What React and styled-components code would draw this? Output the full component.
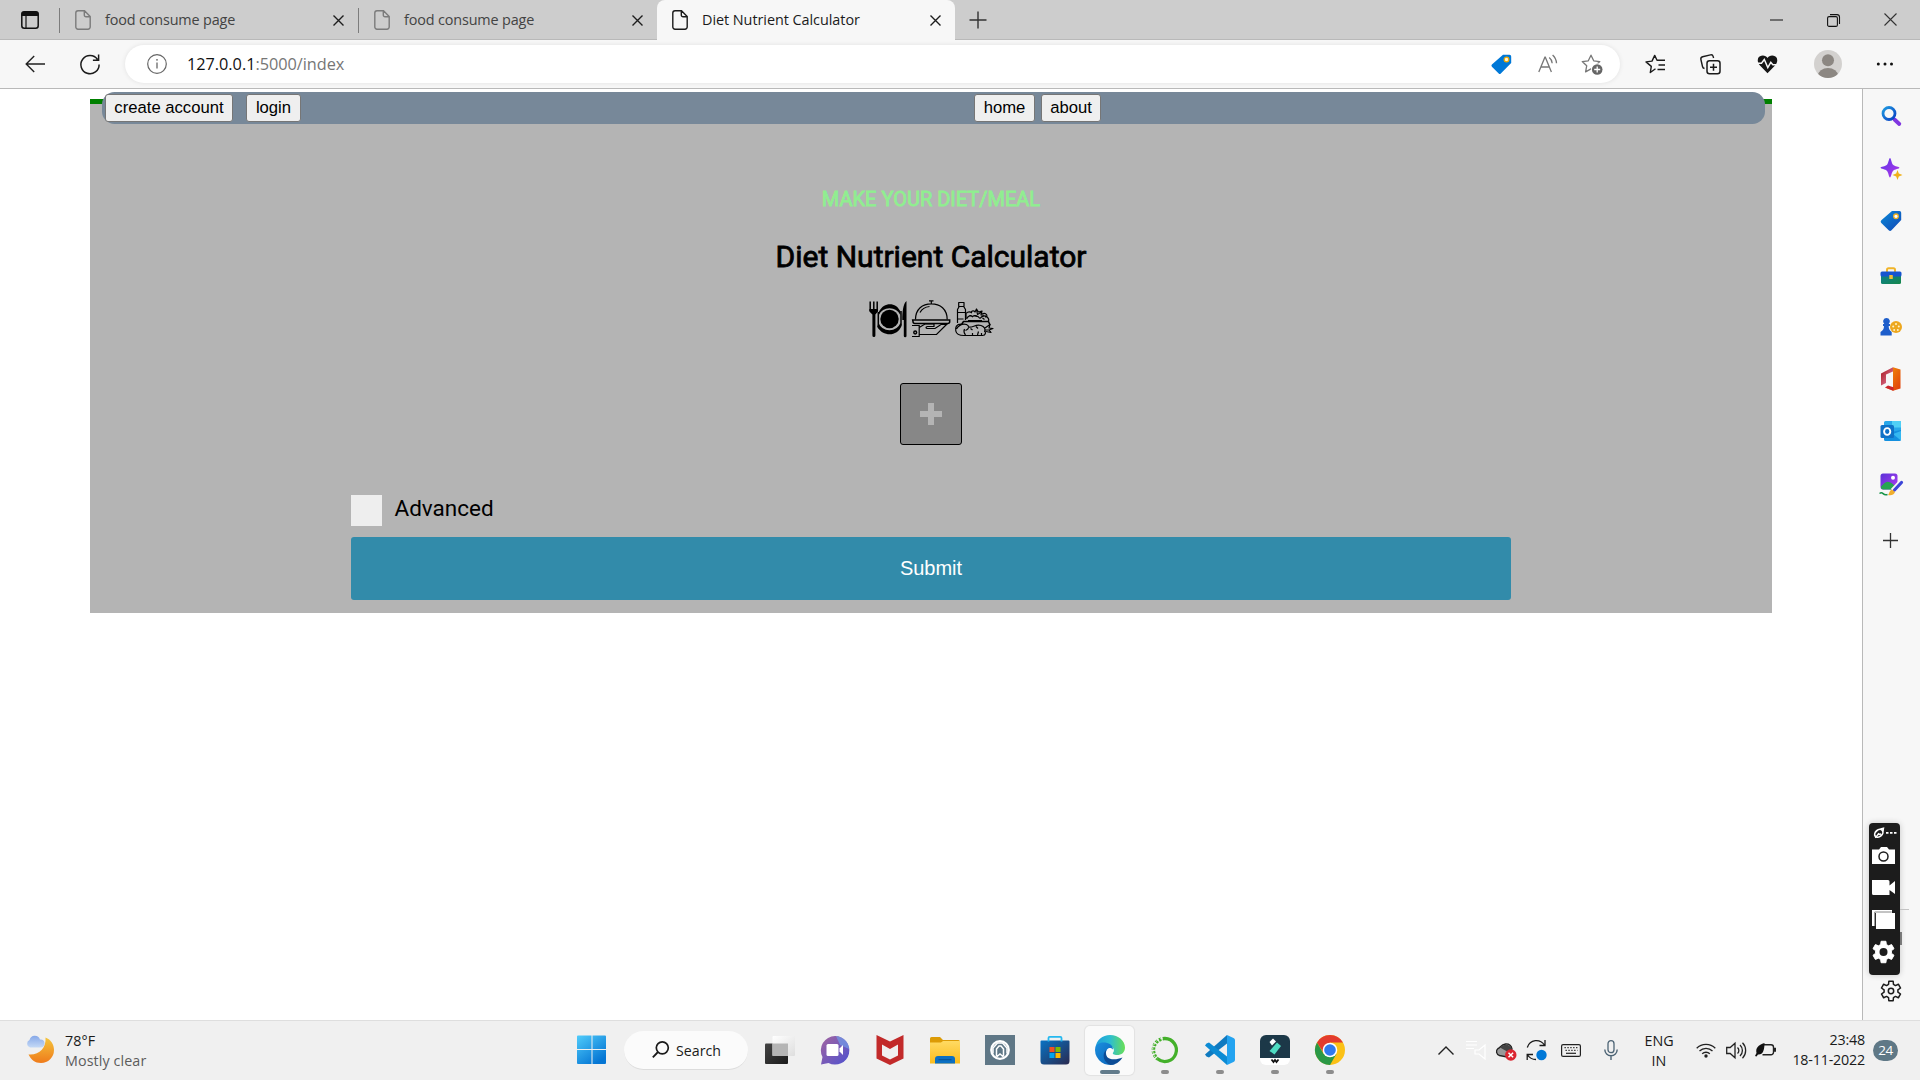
import React from "react";
import styled, { createGlobalStyle } from "styled-components";

const GlobalStyle = createGlobalStyle`
  *, *::before, *::after { box-sizing: border-box; }
  html, body { margin: 0; padding: 0; background: #fff; overflow: hidden; }
  svg { display: block; overflow: visible; }
`;

const ui = `"Open Sans", "Noto Sans", sans-serif`;

const Screen = styled.div`
  width: 1920px;
  height: 1080px;
  display: flex;
  flex-direction: column;
  font-family: ${ui};
  overflow: hidden;
`;

const Glyph = styled.svg`
  flex: none;
  margin-left: ${(p) => p.$ml || 0}px;
  margin-top: ${(p) => p.$mt || 0}px;
`;

const Icon = ({ w = 20, h = 20, ml, mt, children, ...rest }) => (
  <Glyph width={w} height={h} viewBox={`0 0 ${w} ${h}`} fill="none" $ml={ml} $mt={mt} {...rest}>
    {children}
  </Glyph>
);

/* ---------- tab strip ---------- */

const TabStrip = styled.div`
  flex: none;
  height: 40px;
  display: flex;
  align-items: center;
  background: #cdcdcd;
  box-shadow: inset 0 -1px #b9b9b9;
`;

const TabDivider = styled.span`
  width: 1px;
  height: 25px;
  background: #7c7c7c;
  margin-left: ${(p) => p.$ml || 0}px;
`;

const Tab = styled.div`
  width: 298px;
  height: 40px;
  display: flex;
  align-items: center;
  padding: 0 14px 0 15px;
  color: ${(p) => (p.$active ? "#1b1b1b" : "#434343")};
  background: ${(p) => (p.$active ? "#f7f7f7" : "transparent")};
  border-radius: 8px 8px 0 0;
`;

const TabTitle = styled.span`
  flex: 1;
  margin: -1px 0 0 14px;
  font-size: 14.4px;
  letter-spacing: ${(p) => p.$ls}px;
  white-space: nowrap;
`;

const WindowControls = styled.div`
  margin-left: auto;
  padding-right: 23px;
  display: flex;
  align-items: center;
  gap: 44px;
`;

const PageIcon = ({ color }) => (
  <Icon w={16} h={20}>
    <path d="M3 .8h6.500L15.2 6.500V17a2.200 2.200 0 0 1-2.200 2.200H3A2.200 2.200 0 0 1 .8 17V3A2.200 2.200 0 0 1 3 .8ZM9.300 1v4a1.700 1.700 0 0 0 1.700 1.700h4" stroke={color} strokeWidth="1.400" />
  </Icon>
);

const Cross = ({ s = 11, sw = 1.4, color = "#1d1d1d", mt = 1 }) => (
  <Icon w={s} h={s} mt={mt}>
    <path d={`M.5.5l${s - 1} ${s - 1}M${s - 0.5} .5L.5 ${s - 0.5}`} stroke={color} strokeWidth={sw} />
  </Icon>
);

function Tabs() {
  return (
    <TabStrip>
      <Icon w={18} h={18} ml={21}>
        <rect x=".8" y=".8" width="16.400" height="16.400" rx="2.500" stroke="#111" strokeWidth="1.500" />
        <path d="M.5 5V3A2.500 2.500 0 0 1 3 .5h12A2.500 2.500 0 0 1 17.500 3v2Z" fill="#111" />
        <path d="M5 4v13" stroke="#111" strokeWidth="1.200" />
      </Icon>
      <TabDivider $ml={20} />
      <Tab>
        <PageIcon color="#7b7b7b" />
        <TabTitle $ls={-0.14}>food consume page</TabTitle>
        <Cross />
      </Tab>
      <TabDivider />
      <Tab>
        <PageIcon color="#7b7b7b" />
        <TabTitle $ls={-0.14}>food consume page</TabTitle>
        <Cross />
      </Tab>
      <Tab $active>
        <PageIcon color="#1b1b1b" />
        <TabTitle $ls={-0.04}>Diet Nutrient Calculator</TabTitle>
        <Cross />
      </Tab>
      <Icon w={18} h={18} ml={14}>
        <path d="M9 .5v17M.5 9h17" stroke="#333" strokeWidth="1.400" />
      </Icon>
      <WindowControls>
        <Icon w={13} h={13}><path d="M0 6h13" stroke="#111" /></Icon>
        <Icon w={13} h={13}>
          <rect x=".6" y="2.600" width="9.800" height="9.800" rx="1.500" stroke="#111" strokeWidth="1.100" />
          <path d="M3 .6h7A2.500 2.500 0 0 1 12.500 3v7" stroke="#111" strokeWidth="1.100" />
        </Icon>
        <Cross s={13} sw={1.1} color="#333" mt={-1} />
      </WindowControls>
    </TabStrip>
  );
}

/* ---------- toolbar ---------- */

const Toolbar = styled.div`
  flex: none;
  height: 49px;
  display: flex;
  align-items: center;
  background: #f7f7f7;
  border-bottom: 1px solid #b9b9b9;
`;

const AddressBar = styled.div`
  width: 1495px;
  height: 38px;
  margin-left: 25px;
  padding: 0 17px 0 22px;
  display: flex;
  align-items: center;
  background: #fff;
  border-radius: 19px;
  box-shadow: 0 0 5px rgba(0, 0, 0, 0.09);
`;

const Url = styled.span`
  flex: 1;
  margin: -1px 0 0 20px;
  font-size: 16.300px;
  letter-spacing: -0.03px;
  color: #767676;
  b { font-weight: 400; color: #111; }
`;

const Avatar = styled.span`
  width: 28px;
  height: 28px;
  margin-left: 36px;
  border-radius: 50%;
  background: #d3d1cf;
  overflow: hidden;
`;

const STAR = "M10 1.200l2.700 5.600 6.100.8-4.500 4.200 1.100 6.100-5.400-3-5.400 3 1.100-6.100L1.200 7.600l6.100-.8Z";

function Navigation() {
  return (
    <Toolbar>
      <Icon w={20} h={18} ml={25} mt={-1}>
        <path d="M20 9H1.200M9.200 1L1.200 9l8 8" stroke="#222" strokeWidth="1.400" />
      </Icon>
      <Icon w={20} h={20} ml={35}>
        <path d="M17.500 5.500A9.100 9.100 0 1 0 19.100 10.500M18.600.5v5.700h-5.700" stroke="#1b1b1b" strokeWidth="1.500" />
      </Icon>
      <AddressBar>
        <Icon w={20} h={20}>
          <circle cx="10" cy="10" r="9.300" stroke="#666" strokeWidth="1.200" />
          <path d="M10 8.500v6" stroke="#666" strokeWidth="1.300" />
          <circle cx="10" cy="5.800" r=".9" fill="#666" />
        </Icon>
        <Url><b>127.0.0.1</b>:5000/index</Url>
        <Icon w={21} h={21}>
          <path d="M12 .8h6.500A1.700 1.700 0 0 1 20.200 2.500V9L9.800 19.600a1.500 1.500 0 0 1-2.100 0L.9 12.700a1.500 1.500 0 0 1 0-2.100Z" fill="#0078d7" />
          <circle cx="15.500" cy="5.500" r="2.300" fill="#fff6d8" stroke="#f2a900" strokeWidth="1.300" />
        </Icon>
        <Icon w={20} h={20} ml={26}>
          <path d="M.8 18L6.900 3.200h.4L13.400 18M3 13h8.200" stroke="#777" strokeWidth="1.300" />
          <path d="M11.200 3.600a8 8 0 0 1 3 5.600M14.600 1a12 12 0 0 1 3.900 8.200" stroke="#777" strokeWidth="1.300" />
        </Icon>
        <Icon w={22} h={21} ml={23}>
          <path d={STAR} stroke="#777" strokeWidth="1.300" strokeLinejoin="round" />
          <circle cx="16.200" cy="15.500" r="6.300" fill="#fff" />
          <circle cx="16.200" cy="15.500" r="5.300" fill="#666" />
          <path d="M16.200 12.500v6M13.200 15.500h6" stroke="#fff" strokeWidth="1.300" />
        </Icon>
      </AddressBar>
      <Icon w={20} h={20} ml={25}>
        <path d="M10.500 14.800L5.300 18.500l1-6.100L1 7.900l6-.8 2.700-5.700L12 6.200h8M13.500 11H20M12.500 15.500H20" stroke="#1b1b1b" strokeWidth="1.400" strokeLinejoin="round" />
      </Icon>
      <Icon w={21} h={21} ml={35}>
        <rect x="7" y="6.800" width="13" height="13" rx="2.500" stroke="#1b1b1b" strokeWidth="1.500" />
        <path d="M13.500 9.800v7M10 13.300h7" stroke="#1b1b1b" strokeWidth="1.500" />
        <path d="M4.500 14.500A2.500 2.500 0 0 1 2.500 12.500L.9 5.500A2.300 2.300 0 0 1 2.600 2.800L10.500.9A2.300 2.300 0 0 1 13.200 2.600L13.600 4" stroke="#1b1b1b" strokeWidth="1.400" />
      </Icon>
      <Icon w={21} h={19} ml={36}>
        <path d="M10.500 3C12-.4 18.300-.7 19.900 3.300 20.800 5.900 20 8.500 17.800 10.700L10.500 18.200 3.200 10.700C1 8.500.2 5.900 1.100 3.300 2.700-.7 9-.4 10.500 3Z" fill="#161616" />
        <path d="M0 8.200h4.500L7.300 4.500l3.500 8 3-5.200 2 2.400H21" stroke="#f7f7f7" strokeWidth="1.500" />
      </Icon>
      <Avatar>
        <Icon w={28} h={28}>
          <circle cx="14" cy="10.300" r="6" fill="#8c8782" />
          <ellipse cx="14" cy="25.500" rx="10" ry="7.500" fill="#8c8782" />
        </Icon>
      </Avatar>
      <Icon w={18} h={4} ml={34}>
        <circle cx="2.300" cy="2" r="1.500" fill="#111" />
        <circle cx="9" cy="2" r="1.500" fill="#111" />
        <circle cx="15.500" cy="2" r="1.500" fill="#111" />
      </Icon>
    </Toolbar>
  );
}

/* ---------- page ---------- */

const Body = styled.div`
  height: 931px;
  display: flex;
`;

const Viewport = styled.main`
  width: 1862px;
  padding: 10px 90px 0;
  background: #fff;
`;

const Sheet = styled.section`
  height: 514px;
  border-top: 5px solid green;
  background: #b4b4b4;
  display: flex;
  flex-direction: column;
  align-items: center;
  font-family: Roboto, sans-serif;
  color: #000;
`;

const SiteNav = styled.nav`
  flex: none;
  width: 1663px;
  height: 32px;
  margin: -12px 0 0 5px;
  padding: 2px 3px;
  display: flex;
  background: #778899;
  border-radius: 12.500px;
`;

const NavGroup = styled.div`
  display: flex;
  align-items: flex-start;
  gap: ${(p) => p.$gap}px;
  width: ${(p) => p.$w || "auto"};
`;

const NavButton = styled.button`
  height: 28px;
  width: ${(p) => p.$w}px;
  padding: 0 0 1px;
  border: 1px solid #767676;
  border-radius: 3px;
  background: #efefef;
  color: #000;
  font: 16.670px/26px "Liberation Sans", Arial, sans-serif;
  white-space: nowrap;
`;

const Kicker = styled.h3`
  margin: 63px 0 0;
  font-size: 20px;
  line-height: 24px;
  font-weight: 400;
  -webkit-text-stroke: 0.8px #90ee90;
  color: #90ee90;
`;

const Title = styled.h1`
  margin: 26px 0 0;
  font-size: 30px;
  line-height: 40px;
  font-weight: 400;
  -webkit-text-stroke: 0.8px #000;
`;

const FoodIcons = styled.div`
  display: flex;
  gap: 5px;
  margin-top: 23px;
`;

const AddButton = styled.button`
  width: 62px;
  height: 62px;
  margin-top: 45px;
  padding: 0;
  display: flex;
  align-items: center;
  justify-content: center;
  border: 1px solid #000;
  border-radius: 3px;
  background: #878787;
`;

const Form = styled.div`
  width: 1160px;
  margin-top: 50px;
  display: flex;
  flex-direction: column;
  gap: 11px;
`;

const Option = styled.label`
  height: 31px;
  display: flex;
  gap: 12.500px;
  font-size: 22.500px;
  line-height: 27px;
`;

const Checkbox = styled.span`
  width: 31px;
  height: 31px;
  background: #eee;
`;

const Submit = styled.button`
  height: 63px;
  border: 0;
  border-radius: 3px;
  background: #328baa;
  color: #fff;
  font: 20px "Liberation Sans", Arial, sans-serif;
`;

function FoodPage() {
  return (
    <Viewport>
      <Sheet>
        <SiteNav>
          <NavGroup $gap={13} $w="869px">
            <NavButton $w={128}>create account</NavButton>
            <NavButton $w={55}>login</NavButton>
          </NavGroup>
          <NavGroup $gap={6}>
            <NavButton $w={61}>home</NavButton>
            <NavButton $w={60}>about</NavButton>
          </NavGroup>
        </SiteNav>
        <Kicker>MAKE YOUR DIET/MEAL</Kicker>
        <Title>Diet Nutrient Calculator</Title>
        <FoodIcons>
          <Icon w={38} h={38}>
            <path d="M1.200 1.500v9.500M4.800 1.500v9.500M8.200 1.500v9.500" stroke="#000" strokeWidth="1.500" />
            <path d="M.4 9h8.600v2.500L6.400 14.500V35.500a1.400 1.400 0 0 1-3 0V14.500L.4 11.500Z" fill="#000" />
            <path d="M37.500 1v35a1.300 1.300 0 0 1-2.700 0V20H33.300C33.300 12 34 4 37.500 1Z" fill="#000" />
            <circle cx="20.500" cy="19" r="9.200" fill="#000" />
            <path d="M10 11.500C15 1.700 27 1.700 31.500 11.500L31.300 15A12 12 0 0 0 9.800 15ZM9.500 23A12 12 0 0 0 31.500 23L32.800 25.500C28 37.500 14 36.500 8.300 27Z" fill="#000" />
            <path d="M9.300 12v15M32 11v14" stroke="#000" strokeWidth="1.500" />
          </Icon>
          <Icon w={38} h={38}>
            <g stroke="#000" strokeWidth="1.200">
              <path d="M17 .8h4.500M19.300 1v3M3.500 19.500C3.500 9 10.500 3.800 19.300 3.800S35.200 9 35.200 19.500" />
              <path d="M8 12.500C10 8.700 13.500 6.900 17.500 6.500" />
              <path d="M.7 20h37v1.500a2 2 0 0 1-2 2H3a2 2 0 0 1-2-2Z" fill="#b4b4b4" strokeWidth="1.500" />
              <path d="M0 25.500h7.200V36.500H0M7.200 27.500L13 24h9M7.200 34.500H24.500L34.500 24.500H29L23 28.500H15.500C13.500 28.500 13.500 26.500 15.500 26.500H22L22 24" />
              <circle cx="3.200" cy="32.500" r="1.400" strokeWidth="1.500" />
            </g>
          </Icon>
          <Icon w={38} h={38}>
            <g stroke="#000" strokeWidth="1.200" strokeLinejoin="round">
              <path d="M3.700 2.500H9v4H3.700ZM4.200 6.500L2.500 9.500V23M8.700 6.500L10.500 9.500V20M2.500 12.500h8M2.500 19h6" />
              <path d="M11 13.500c2-2 4-2 6-.5M16 12.500c1-2 3-2 4-.5l1.500-3 2 3 3.500-1-1 4 3.500.5M21.500 9.500l1 5 4-2.500M27 14c3-1.500 5 0 5 2.500M11 14v5M12 18.500c1-3 4-3.500 6-1.500M13 20.500h14M17 17c3-2.500 6-1 8 1.500M25 18.500c2-3 5-3 7-1.500 2 1.500 2 3.500 1 5" />
              <path d="M19 15.500l3 1M27.500 18l2 1.500M30 15.500l1 2M14.500 15.500h2" />
              <path d="M6.500 24.500L8.500 21.500H33.500L35 25" strokeWidth="1.500" />
              <path d="M6 24C1.500 24 0 27.500.8 31 1.500 35 5 35.500 9 35.500H27.500C31 35.500 31 32 29.500 30M1.500 29c2.500-4 6-5.500 10-4.500 3 1.500 3 4-1 6M9.500 29c-1 2-.5 4 1 6M13 27c5 1 7-3 13-1.500 3 1 5 3 3.500 6.500M17.500 35v-2M22.500 35l1-3.500M26.500 35v-2M15.500 28.500l2 1.500M21 26.500l2 2" />
              <path d="M30 28l5-3.500-1 3.500 4 .5-4 1.500 2 2.500-5-1M30 30h5" />
            </g>
          </Icon>
        </FoodIcons>
        <AddButton>
          <Icon w={22} h={22}><path d="M11 0v22M0 11h22" stroke="#b4b4b4" strokeWidth="6" /></Icon>
        </AddButton>
        <Form>
          <Option><Checkbox />Advanced</Option>
          <Submit>Submit</Submit>
        </Form>
      </Sheet>
    </Viewport>
  );
}

/* ---------- side rail ---------- */

const Rail = styled.aside`
  position: relative;
  width: 58px;
  background: #f7f7f7;
  border-left: 1px solid #b9b9b9;
  display: flex;
  flex-direction: column;
  align-items: center;
  padding: 14px 2px 0 0;
`;

const RailSlot = styled.div`
  height: ${(p) => p.$h || 52.600}px;
  flex: none;
  display: grid;
  place-items: center;
`;

const RailSettings = styled.div`
  margin-top: auto;
  padding-bottom: 18px;
`;

const Recorder = styled.div`
  position: absolute;
  left: 6px;
  top: 734px;
  width: 31px;
  height: 152px;
  border-radius: 4px;
  background: #1c1c1c;
  box-shadow: 0 0 6px rgba(0, 0, 0, 0.2);
`;

const Gradient = ({ id, from, to }) => (
  <linearGradient id={id} x1="0" y1="0" x2="1" y2="1">
    <stop offset="0" stopColor={from} />
    <stop offset="1" stopColor={to} />
  </linearGradient>
);

const gearPath = (c, outer, inner) => {
  const pts = [];
  for (let i = 0; i < 6; i++) {
    const a = (i * Math.PI) / 3 - Math.PI / 2;
    [[-0.36, inner], [-0.22, outer], [0.22, outer], [0.36, inner]].forEach(([d, r]) => {
      pts.push(`${(c + r * Math.cos(a + d)).toFixed(2)} ${(c + r * Math.sin(a + d)).toFixed(2)}`);
    });
  }
  return `M${pts.join("L")}Z`;
};

function SideRail() {
  return (
    <Rail>
      <RailSlot $h={25}>
        <Icon w={20} h={20}>
          <defs><Gradient id="lens" from="#1f9be0" to="#0a3fc4" /></defs>
          <path d="M13.500 13.500l4.800 4.500" stroke="#8036e0" strokeWidth="3.800" strokeLinecap="round" />
          <circle cx="8" cy="7.500" r="6" stroke="url(#lens)" strokeWidth="2.800" />
        </Icon>
      </RailSlot>
      <RailSlot $h={81}>
        <Icon w={22} h={22}>
          <defs><Gradient id="spark" from="#5c35e8" to="#b338e8" /></defs>
          <path d="M10 0c1 0 1.500 5 3 6.800 1.500 1.700 6.500 2 6.500 3s-5 1.500-6.500 3.200C11.500 14.700 11 19.500 10 19.500S8.500 14.700 7 13C5.500 11.300.5 10.800.5 9.800s5-1.300 6.500-3C8.500 5 9 0 10 0Z" fill="url(#spark)" />
          <path d="M17.500 12l1.300 3.600 3.700 1.400-3.700 1.400-1.300 3.600-1.300-3.600-3.700-1.400 3.700-1.400Z" fill="#efb018" />
        </Icon>
      </RailSlot>
      <RailSlot $h={24}>
        <Icon w={22} h={22}>
          <defs><Gradient id="tag" from="#0a8ad8" to="#1347b5" /></defs>
          <path d="M12 1h7.500A1.700 1.700 0 0 1 21.200 2.700V10L11.500 20.300a2 2 0 0 1-2.800 0L1.300 13a2 2 0 0 1 0-2.800Z" fill="url(#tag)" />
          <circle cx="16" cy="6.300" r="2.300" fill="#fff" stroke="#f0b020" strokeWidth="1.300" />
        </Icon>
      </RailSlot>
      <RailSlot $h={83}>
        <Icon w={22} h={18} mt={2}>
          <defs><Gradient id="box" from="#0b7f91" to="#17884a" /></defs>
          <path d="M7 5V2.800A1.500 1.500 0 0 1 8.500 1.300h5A1.500 1.500 0 0 1 15 2.800V5" stroke="#f0b429" strokeWidth="2" />
          <rect x="1" y="7" width="20" height="10" rx="1.500" fill="url(#box)" />
          <rect x=".5" y="4.500" width="21" height="5" rx="1.500" fill="#1654cf" />
          <rect x="9.300" y="8" width="3.500" height="4" rx=".6" fill="#f3bd35" />
        </Icon>
      </RailSlot>
      <RailSlot $h={22}>
        <Icon w={22} h={20}>
          <circle cx="16" cy="10" r="6" fill="#eda71e" />
          <circle cx="16" cy="7" r="1" fill="#fff3c8" /><circle cx="13.200" cy="9.500" r="1" fill="#fff3c8" /><circle cx="18.800" cy="9.500" r="1" fill="#fff3c8" /><circle cx="14.200" cy="13" r="1" fill="#fff3c8" /><circle cx="17.800" cy="13" r="1" fill="#fff3c8" />
          <path d="M6.500 1a3.400 3.400 0 0 1 2.200 6H10v2H8.700c0 3 .8 4.500 3 6V18.500H.5V15c2.500-1.500 3.500-3 3.500-6H3V7h1.300A3.400 3.400 0 0 1 6.500 1Z" fill="#1e5ecb" />
        </Icon>
      </RailSlot>
      <RailSlot $h={82}>
        <Icon w={22} h={24}>
          <defs><Gradient id="office" from="#f59a08" to="#df3b0b" /><Gradient id="officeL" from="#a61319" to="#e98bb0" /></defs>
          <path d="M13 .3l7.500 2.100v19L13 23.700 5 20.500l8-.2V4Z" fill="url(#office)" />
          <path d="M13 .3V4.500L6 7.500v8.500L1 18.500V6.500Z" fill="url(#officeL)" />
          <path d="M5 20.500l3-2 5.500 1.700v3.500Z" fill="#cc252c" />
        </Icon>
      </RailSlot>
      <RailSlot $h={22}>
        <Icon w={22} h={20}>
          <path d="M5.500 0h14A1.500 1.500 0 0 1 21 1.500V13H4V1.500A1.500 1.500 0 0 1 5.500 0Z" fill="#28a8ea" />
          <path d="M12 0h9v6.500h-9Z" fill="#50d0f6" />
          <path d="M4 12.500L21 9v9.500A1.500 1.500 0 0 1 19.500 20h-14A1.500 1.500 0 0 1 4 18.500Z" fill="#1490df" />
          <path d="M21 10v9.500L13 13Z" fill="#35b8f1" />
          <rect x=".5" y="4" width="13.500" height="13" rx="1.500" fill="#0f72c7" />
          <ellipse cx="7.200" cy="10.500" rx="3.100" ry="3.400" stroke="#fff" strokeWidth="1.900" />
        </Icon>
      </RailSlot>
      <RailSlot $h={84}>
        <Icon w={24} h={23} ml={1}>
          <defs><Gradient id="pic" from="#5932d8" to="#b03df0" /></defs>
          <rect x="1.500" y=".5" width="17" height="16" rx="2.500" fill="url(#pic)" />
          <path d="M2 13.500C8 6 11 8 17.500 14c-2 3-3.500 2.500-5 2.500H4A2.500 2.500 0 0 1 2 15Z" fill="#27a553" />
          <circle cx="14" cy="4.800" r="2" fill="#fff" />
          <path d="M22.500 9L14 18" stroke="#f7f7f7" strokeWidth="6" />
          <path d="M22.500 9.500L15.500 17" stroke="#3c45d8" strokeWidth="3.200" strokeLinecap="round" />
          <path d="M13 16.500l3 2.500c-1 3.500-4.500 3.500-7 3 1.500-1 1-4.500 4-5.500Z" fill="#f0ae2d" />
          <path d="M.5 20.500c4-3 3 3 8 1" stroke="#179448" strokeWidth="1.500" />
        </Icon>
      </RailSlot>
      <RailSlot $h={28}>
        <Icon w={15} h={15}><path d="M7.500 0v15M0 7.500h15" stroke="#333" strokeWidth="1.300" /></Icon>
      </RailSlot>
      <RailSettings>
        <Icon w={22} h={22}>
          <path d={gearPath(11, 10, 7)} stroke="#1b1b1b" strokeWidth="1.500" strokeLinejoin="round" />
          <circle cx="11" cy="11" r="2.700" stroke="#1b1b1b" strokeWidth="1.500" />
        </Icon>
      </RailSettings>
      <Recorder>
        <Icon w={44} h={152}>
          <path d="M31 86.500h9" stroke="#c4c4c4" />
          <path d="M32 109v13" stroke="#333" strokeWidth="1.200" />
          <ellipse cx="9.800" cy="10.300" rx="4.600" ry="3.300" transform="rotate(-40 9.800 10.300)" stroke="#fff" strokeWidth="1.700" />
          <path d="M6 14.500c2-1 2.500-3 4-4.200M11.500 6l3-.8-.5 3M9.500 11.500l2.500-.5" stroke="#fff" strokeWidth="1.400" />
          <path d="M17 9.800h2.500M21 9.800h2.500M25 9.800h2.500" stroke="#fff" strokeWidth="1.800" />
          <path d="M3 26.500h7l2-2.500h6l2 2.500h6V41H3Z" fill="#fff" />
          <circle cx="14.500" cy="33.500" r="4.500" fill="#fff" stroke="#1c1c1c" strokeWidth="1.500" />
          <path d="M3 57h16a1.500 1.500 0 0 1 1.500 1.500v4L26 58v13l-5.500-4v5H4.500A1.500 1.500 0 0 1 3 70.500Z" fill="#fff" />
          <path d="M3 87h20v3H6v13H3Z" fill="#fff" />
          <path d="M7 90h19v16H7Z" fill="#fff" />
          <path d="M5.700 103V89h17" stroke="#888" />
          <path d={gearPath(0, 11, 8)} transform="translate(14.500 129)" fill="#fff" stroke="#fff" strokeLinejoin="round" />
          <circle cx="14.500" cy="129" r="4" fill="#1c1c1c" />
        </Icon>
      </Recorder>
    </Rail>
  );
}

/* ---------- taskbar ---------- */

const Taskbar = styled.footer`
  flex: none;
  height: 60px;
  display: flex;
  align-items: center;
  background: #f0f0f0;
  box-shadow: inset 0 1px #dedede;
  color: #1a1a1a;
`;

const Lines = styled.div`
  display: flex;
  flex-direction: column;
  align-items: ${(p) => p.$align || "flex-start"};
  width: ${(p) => p.$w}px;
  margin-left: ${(p) => p.$ml || 0}px;
  padding-top: ${(p) => p.$pt || 0}px;
  font-size: 14.300px;
  line-height: 20px;
  letter-spacing: ${(p) => p.$ls || 0}px;
  white-space: nowrap;
`;

const Muted = styled.span`
  color: #5c5c5c;
`;

const SearchPill = styled.div`
  width: 124px;
  height: 39px;
  margin: 0 4px 0 17px;
  padding: 1px 0 0 28px;
  display: flex;
  align-items: center;
  gap: 7px;
  border-radius: 20px;
  border-bottom: 1px solid #dcdcdc;
  background: #fbfbfb;
  font-size: 14.200px;
`;

const TaskSlot = styled.div`
  width: 55px;
  height: 60px;
  display: grid;
  grid-template-rows: 50px 4px;
  justify-items: center;
  align-content: start;
`;

const TaskTile = styled.div`
  width: 49px;
  height: 49px;
  margin-top: 6px;
  display: grid;
  place-items: center;
  border-radius: 5px;
  background: ${(p) => (p.$active ? "#fafafa" : "transparent")};
  box-shadow: ${(p) => (p.$active ? "0 0 1px 1px rgba(0,0,0,.06)" : "none")};
`;

const Indicator = styled.span`
  width: ${(p) => (p.$active ? 20 : 8)}px;
  height: 4px;
  border-radius: 2px;
  background: ${(p) => (p.$active ? "#627b8b" : "#8c8c8c")};
  z-index: 1;
`;

const Badge = styled.span`
  width: 25px;
  height: 21px;
  margin-left: 8px;
  display: grid;
  place-items: center;
  border-radius: 11px;
  background: #5f7886;
  color: #fff;
  font-size: 13.500px;
  line-height: 20px;
  letter-spacing: -0.5px;
`;

const APPS = [
  {
    name: "taskview",
    art: (
      <>
        <defs><Gradient id="tv" from="#444" to="#1b1b1b" /><Gradient id="tv2" from="#fff" to="#dedede" /></defs>
        <rect x="0" y="8.500" width="23" height="20.500" rx="1" fill="url(#tv)" />
        <rect x="7.500" y="1" width="22.500" height="20" rx="1" fill="url(#tv2)" />
        <rect x="7.500" y="8.500" width="15.500" height="12.500" fill="#b5b5b5" />
      </>
    ),
  },
  {
    name: "chat",
    art: (
      <>
        <defs><Gradient id="chat" from="#a3649f" to="#4e51d0" /></defs>
        <path d="M15 1A14.300 14.300 0 1 1 8.500 28L1 29.500 2.500 22A14.300 14.300 0 0 1 15 1Z" fill="url(#chat)" />
        <path d="M16 1.100A14.200 14.200 0 0 1 29.200 14L20 10Z" fill="#719be8" opacity=".7" />
        <rect x="6.500" y="9" width="12" height="12" rx="1.500" fill="#fff" />
        <path d="M19.500 13.500L23 10v10l-3.500-3.500Z" fill="#fff" />
      </>
    ),
  },
  {
    name: "shield",
    art: <path d="M1.500 0L15 6.500 28.500 0V23.500L15 30 1.500 23.500ZM7 9.500v11L15 24.500 23 20.500v-11L15 14Z" fill="#c22a2a" fillRule="evenodd" />,
  },
  {
    name: "files",
    art: (
      <>
        <defs><linearGradient id="folder" x1="0" y1="0" x2="0" y2="1"><stop offset="0" stopColor="#ffda63" /><stop offset="1" stopColor="#fbbc1c" /></linearGradient></defs>
        <path d="M0 3.500A1.500 1.500 0 0 1 1.500 2H10l3 3h15.500A1.500 1.500 0 0 1 30 6.500V10H0Z" fill="#dc9b06" />
        <path d="M0 7.500h11l2-1.500h17v22.500H0Z" fill="url(#folder)" />
        <path d="M5 28.500V24a3 3 0 0 1 3-3h14a3 3 0 0 1 3 3v4.500Z" fill="#0b6fc2" />
        <path d="M8.500 24.700h13" stroke="#064f92" />
      </>
    ),
  },
  {
    name: "assistant",
    art: (
      <>
        <rect width="30" height="30" fill="#5f7786" />
        <circle cx="15" cy="15" r="8.800" stroke="#fff" strokeWidth="2.200" />
        <path d="M8 18.500v-5.500L12.500 8h5L22 13v5.500M11.500 21v-7L14 11h2l2.500 3v7M11.500 22L15 19l3.500 3" stroke="#fff" strokeWidth="1.500" />
      </>
    ),
  },
  {
    name: "store",
    art: (
      <>
        <defs><Gradient id="store" from="#0873c4" to="#2a2a50" /></defs>
        <path d="M.5 6.500A1 1 0 0 1 1.500 5.500h27A1 1 0 0 1 29.500 6.500V26a3.500 3.500 0 0 1-3.500 3.500H4A3.500 3.500 0 0 1 .5 26Z" fill="url(#store)" />
        <path d="M8.500 6.500V3A1.200 1.200 0 0 1 9.700 1.800h10.600A1.200 1.200 0 0 1 21.500 3v3.500" stroke="#25b8ef" strokeWidth="1.800" />
        <path d="M9.500 12h5v5h-5Z" fill="#f25022" /><path d="M15.500 12h5v5h-5Z" fill="#7fba00" /><path d="M9.500 18h5v5h-5Z" fill="#00a4ef" /><path d="M15.500 18h5v5h-5Z" fill="#ffb900" />
      </>
    ),
  },
  {
    name: "edge",
    active: true,
    art: (
      <>
        <defs>
          <linearGradient id="edgeTop" x1="0" y1=".5" x2="1" y2=".5"><stop offset="0" stopColor="#1d9cdc" /><stop offset=".5" stopColor="#2dbdd0" /><stop offset="1" stopColor="#69df55" /></linearGradient>
          <Gradient id="edgeLow" from="#1b8fdf" to="#0a62b8" />
        </defs>
        <path d="M.3 13C1.500 5 7.500 0 15 0c8.500 0 15 6 15 12.500 0 5-3.500 7.500-8 7.500-3 0-5.500-1-3.500-3 1-1.500.5-5-3.500-5.500C9 11 3 9 .3 13Z" fill="url(#edgeTop)" />
        <path d="M0 15C.3 9.500 4 7.500 8.500 7.500c5 0 9.500 2.500 9.500 7C14 11 11 14.500 11 18c0 6 5 10.500 9 11A15 15 0 0 1 0 15Z" fill="url(#edgeLow)" />
        <path d="M11.500 14.500C8 24 18 26.500 27.500 22.500 25 27 20 30 15.500 30 9 28 6 19 11.500 14.500Z" fill="#0c4c96" />
      </>
    ),
  },
  {
    name: "anaconda",
    running: true,
    art: (
      <>
        <path d="M15 3.500A11.500 11.500 0 1 1 7.500 23.800" stroke="#43b02a" strokeWidth="3.300" />
        <path d="M15 3.500A11.500 11.500 0 0 0 7.500 23.800" stroke="#43b02a" strokeWidth="3.500" strokeDasharray="2.500 1.300" />
        <path d="M13 3A12 12 0 0 0 5 22" stroke="#f0f0f0" strokeWidth=".9" strokeDasharray="3 1.500" />
      </>
    ),
  },
  {
    name: "code",
    running: true,
    art: (
      <>
        <path d="M22 0v8.500L4 22.500 1.500 21.500 0 19.500Z" fill="#0f7ac0" />
        <path d="M0 10.500L1.500 8.500 4 7.500 22 21.500V30Z" fill="#0c8bd4" />
        <path d="M22 0l6.500 3A2.500 2.500 0 0 1 30 5v20a2.500 2.500 0 0 1-1.500 2L22 30Z" fill="#23a3f0" />
      </>
    ),
  },
  {
    name: "filmora",
    running: true,
    art: (
      <>
        <path d="M0 23V6A6 6 0 0 1 6 0h18a6 6 0 0 1 6 6v17Z" fill="#1c3848" />
        <path d="M0 23h30v1a6 6 0 0 1-6 6H6a6 6 0 0 1-6-6Z" fill="#fff" />
        <path d="M9.500 7l3.500-3.500L16 6.500 12 10.500Z" fill="#fff" />
        <path d="M9.500 16l7.500-8.500 4 3.500-6.500 8.500Z" fill="#4fdcc2" />
        <path d="M11.500 24.500l2 2.500 1.500-2 1.500 2 2-2.500" stroke="#111" strokeWidth="1.800" />
      </>
    ),
  },
  {
    name: "chrome",
    running: true,
    art: (
      <>
        <circle cx="15" cy="15" r="15" fill="#fbc116" />
        <path d="M2 7.500A15 15 0 0 1 28 7.500H15L9 18.500Z" fill="#e33b2e" />
        <path d="M2 7.500A15 15 0 0 0 15 30L21.500 18.700 15 21 8.500 18.700Z" fill="#2a9846" />
        <circle cx="15" cy="15" r="7.300" fill="#fff" />
        <circle cx="15" cy="15" r="5.800" fill="#3079ed" />
      </>
    ),
  },
];

function WindowsTaskbar() {
  return (
    <Taskbar>
      <Icon w={29} h={29} ml={26} mt={-2}>
        <defs>
          <linearGradient id="moon" x1="0" y1="0" x2="0" y2="1"><stop offset="0" stopColor="#f4c53d" /><stop offset="1" stopColor="#ef7b1b" /></linearGradient>
          <linearGradient id="cloud" x1="0" y1="0" x2="0" y2="1"><stop offset="0" stopColor="#86a8e8" /><stop offset="1" stopColor="#c4d9f6" /></linearGradient>
        </defs>
        <path d="M19.500 2.500C25 4.500 28 9.500 28 15a13 13 0 0 1-13 13C9 28 5 24.500 2.500 19.500 13 20.500 20.500 13 19.500 2.500Z" fill="url(#moon)" />
        <path d="M4 12.500a4 4 0 0 1-.5-7.500A5.500 5.500 0 0 1 14 4.500a4 4 0 0 1 1 8Z" fill="url(#cloud)" />
      </Icon>
      <Lines $ml={10} $w={512} $ls={0.1} $pt={2}>
        <span>78°F</span>
        <Muted>Mostly clear</Muted>
      </Lines>
      <Icon w={30} h={30}>
        <defs><linearGradient id="win" gradientUnits="userSpaceOnUse" x1="0" y1="0" x2="20" y2="28"><stop offset="0" stopColor="#51cdfb" /><stop offset="1" stopColor="#0576d4" /></linearGradient></defs>
        <path d="M1 .5h13.500V14H0V1.500A1 1 0 0 1 1 .5ZM15.500.5H28a1 1 0 0 1 1 1V14H15.500ZM0 15h14.500v14H1a1 1 0 0 1-1-1ZM15.500 15H29v13a1 1 0 0 1-1 1H15.500Z" fill="url(#win)" />
      </Icon>
      <SearchPill>
        <Icon w={17} h={17} mt={-1}>
          <circle cx="10.300" cy="6.800" r="6" stroke="#1a1a1a" strokeWidth="1.700" />
          <path d="M6 11L.8 16.300" stroke="#1a1a1a" strokeWidth="1.800" />
        </Icon>
        Search
      </SearchPill>
      {APPS.map((app) => (
        <TaskSlot key={app.name}>
          <TaskTile $active={app.active}>
            <Icon w={30} h={30} mt={-1}>{app.art}</Icon>
          </TaskTile>
          {(app.active || app.running) && <Indicator $active={app.active} />}
        </TaskSlot>
      ))}
      <Icon w={16} h={9} ml={81}><path d="M.5 8.500L8 1l7.500 7.500" stroke="#222" strokeWidth="1.400" /></Icon>
      <Icon w={20} h={20} ml={12}>
        <path d="M0 1.500h11M0 5h11M0 8.500h8M9 10h4l6-5v14l-6-5H9Z" stroke="#fff" strokeWidth="1.200" />
      </Icon>
      <Icon w={21} h={18} ml={10} mt={3}>
        <path d="M3.500 12.500A4 4 0 0 1 2 5.500C4 5 5 1.500 9.500 1c4-.3 6 2.500 6.500 5L11 14Z" fill="#999" stroke="#222" strokeWidth="1.300" />
        <path d="M4 4.500C8 1 13 .5 16 6L12 9Z" fill="#444" />
        <circle cx="14.800" cy="12" r="5.700" fill="#db2530" />
        <path d="M12.500 9.700l4.600 4.600M17.100 9.700l-4.600 4.600" stroke="#fff" strokeWidth="1.500" />
      </Icon>
      <Icon w={21} h={20} ml={9}>
        <path d="M1.300 7.500C4-1 14-1.500 18.500 5M19 0v5.500h-5.500M1.200 20v-5.500H7M1.500 15c2 3 5 4.500 8.500 4.500" stroke="#1b1b1b" strokeWidth="1.300" />
        <circle cx="15.500" cy="15" r="5.200" fill="#0078d7" />
      </Icon>
      <Icon w={20} h={13} ml={14}>
        <rect x=".6" y=".6" width="18.800" height="11.800" rx="1.500" stroke="#222" strokeWidth="1.200" />
        <path d="M3.500 3.700h13M4.500 6.400h12" stroke="#222" strokeWidth="1.300" strokeDasharray="1.300 1.600" />
        <path d="M5 9.300h10" stroke="#222" strokeWidth="1.200" />
      </Icon>
      <Icon w={14} h={20} ml={23}>
        <rect x="4" y=".7" width="6" height="12" rx="3" stroke="#4d6475" strokeWidth="1.300" />
        <path d="M.8 9.500a6.200 6.200 0 0 0 12.400 0M7 15.800V20" stroke="#4d6475" strokeWidth="1.400" />
      </Icon>
      <Lines $align="center" $w={36} $ml={23} $pt={1}>
        <span>ENG</span>
        <span>IN</span>
      </Lines>
      <Icon w={20} h={16} ml={19}>
        <path d="M.7 6.300a13 13 0 0 1 18.600 0M3.500 9a9.200 9.200 0 0 1 13 0M6.200 11.800a5.400 5.400 0 0 1 7.600 0" stroke="#222" strokeWidth="1.300" />
        <circle cx="10" cy="14" r="1.700" fill="#222" />
      </Icon>
      <Icon w={20} h={17} ml={10}>
        <path d="M.7 5.500h3.500L9 1.200v14.600L4.200 11.500H.7ZM11.500 5.500a4 4 0 0 1 0 6M14 3a7.500 7.500 0 0 1 0 11M16.500.8a11 11 0 0 1 0 15.400" stroke="#222" strokeWidth="1.300" />
      </Icon>
      <Icon w={21} h={16} ml={9}>
        <path d="M9 2.800h7A2.500 2.500 0 0 1 18.500 5.300v5A2.500 2.500 0 0 1 16 12.800H7.500" stroke="#222" strokeWidth="1.400" />
        <path d="M19 5.800h2v4h-2Z" fill="#222" />
        <path d="M9.500 1C3 3 .5 6 1.500 11L0 14l1.500.5L3 12.500C8 13 9.500 8 9.500 1Z" fill="#111" />
      </Icon>
      <Lines $align="flex-end" $w={86} $ml={3} $ls={-0.2}>
        <span>23:48</span>
        <span>18-11-2022</span>
      </Lines>
      <Badge>24</Badge>
    </Taskbar>
  );
}

export default function App() {
  return (
    <Screen>
      <GlobalStyle />
      <Tabs />
      <Navigation />
      <Body>
        <FoodPage />
        <SideRail />
      </Body>
      <WindowsTaskbar />
    </Screen>
  );
}
